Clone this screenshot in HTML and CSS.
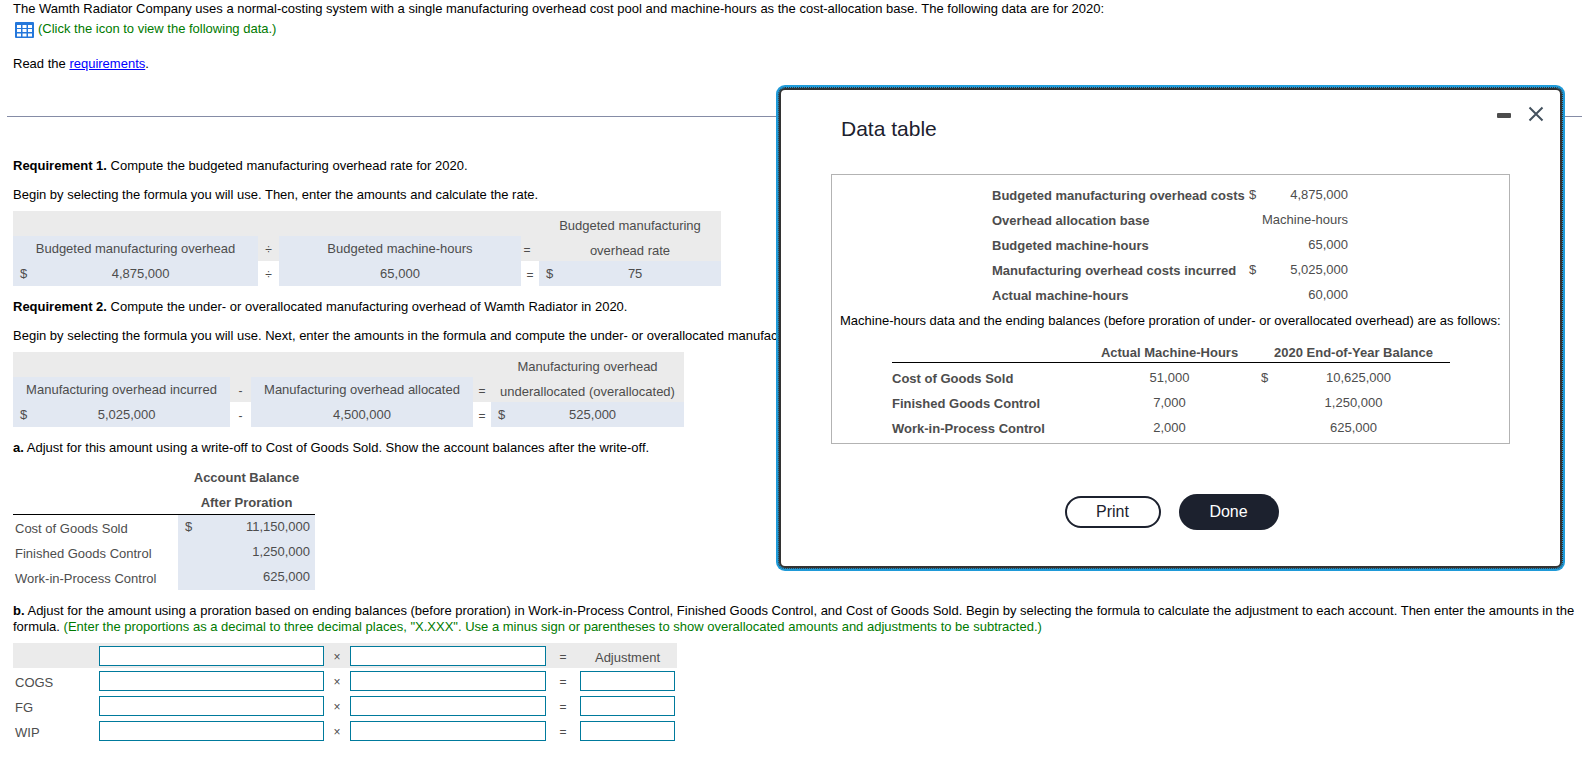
FILE: index.html
```html
<!DOCTYPE html>
<html lang="en">
<head>
<meta charset="utf-8">
<title>Wamth Radiator Company</title>
<link rel="stylesheet" href="styles.css">
</head>
<body>
<main class="page">
  <section class="intro">
    <p>The Wamth Radiator Company uses a normal-costing system with a single manufacturing overhead cost pool and machine-hours as the cost-allocation base. The following data are for 2020:</p>
    <p class="icon-line">
      <button type="button" class="table-icon" aria-label="View the data table">
        <svg width="20" height="16" viewBox="0 0 20 16"><rect width="19" height="16" rx="1" fill="#2477db"/><path fill="#fff" d="M2 3h4v3H2zM7.500 3h4v3h-4zM13 3h4v3h-4zM2 7h4v3H2zM7.500 7h4v3h-4zM13 7h4v3h-4zM2 11.500h4v3H2zM7.500 11.500h4v3h-4zM13 11.500h4v3h-4z"/></svg>
      </button>
      <span class="hint">(Click the icon to view the following data.)</span>
    </p>
    <p class="read">Read the <a href="#requirements">requirements</a>.</p>
  </section>
  <hr class="rule">
  <section class="work">
    <p id="requirements"><b>Requirement 1.</b> Compute the budgeted manufacturing overhead rate for 2020.</p>
    <p>Begin by selecting the formula you will use. Then, enter the amounts and calculate the rate.</p>
    <table class="formula">
      <colgroup><col class="w-245"><col class="w-21"><col class="w-242"><col class="w-18"><col class="w-182"></colgroup>
      <tr class="head"><td colspan="4"></td><th rowspan="2"><span class="low">Budgeted manufacturing</span><span class="low">overhead rate</span></th></tr>
      <tr class="head"><th class="fill">Budgeted manufacturing overhead</th><td class="op">÷</td><th class="fill">Budgeted machine-hours</th><td class="op tight">=</td></tr>
      <tr><td class="fill"><span class="money"><span>$</span><span>4,875,000</span></span></td><td class="op">÷</td><td class="fill">65,000</td><td class="op">=</td><td class="fill"><span class="money"><span>$</span><span>75</span></span></td></tr>
    </table>
    <p><b>Requirement 2.</b> Compute the under- or overallocated manufacturing overhead of Wamth Radiator in 2020.</p>
    <p class="clip">Begin by selecting the formula you will use. Next, enter the amounts in the formula and compute the under- or overallocated manufacturing overhead.</p>
    <table class="formula">
      <colgroup><col class="w-217"><col class="w-21"><col class="w-222"><col class="w-18"><col class="w-193"></colgroup>
      <tr class="head"><td colspan="4"></td><th rowspan="2"><span class="low">Manufacturing overhead</span><span class="low">underallocated (overallocated)</span></th></tr>
      <tr class="head"><th class="fill">Manufacturing overhead incurred</th><td class="op">-</td><th class="fill">Manufacturing overhead allocated</th><td class="op">=</td></tr>
      <tr><td class="fill"><span class="money"><span>$</span><span>5,025,000</span></span></td><td class="op">-</td><td class="fill">4,500,000</td><td class="op">=</td><td class="fill"><span class="money"><span>$</span><span>525,000</span></span></td></tr>
    </table>
    <p><b>a.</b> Adjust for this amount using a write-off to Cost of Goods Sold. Show the account balances after the write-off.</p>
    <table class="balance">
      <colgroup><col class="w-165"><col class="w-137"></colgroup>
      <thead><tr><td></td><th><span class="low">Account Balance</span><span class="low">After Proration</span></th></tr></thead>
      <tbody>
        <tr><th>Cost of Goods Sold</th><td class="fill"><span class="amount"><span>$</span><span>11,150,000</span></span></td></tr>
        <tr><th>Finished Goods Control</th><td class="fill"><span class="amount"><span></span><span>1,250,000</span></span></td></tr>
        <tr><th>Work-in-Process Control</th><td class="fill"><span class="amount"><span></span><span>625,000</span></span></td></tr>
      </tbody>
    </table>
    <p class="part-b"><b>b.</b> Adjust for the amount using a proration based on ending balances (before proration) in Work-in-Process Control, Finished Goods Control, and Cost of Goods Sold. Begin by selecting the formula to calculate the adjustment to each account. Then enter the amounts in the formula. <span class="hint">(Enter the proportions as a decimal to three decimal places, "X.XXX". Use a minus sign or parentheses to show overallocated amounts and adjustments to be subtracted.)</span></p>
    <table class="entry">
      <colgroup><col class="w-84"><col class="w-229"><col class="w-22"><col class="w-200"><col class="w-30"><col class="w-99"></colgroup>
      <tr class="head"><td></td><td><input type="text" aria-label="Formula first factor"></td><td class="op">×</td><td><input type="text" aria-label="Formula second factor"></td><td class="op">=</td><th class="low mid">Adjustment</th></tr>
      <tr><th class="low">COGS</th><td><input type="text" aria-label="COGS first factor"></td><td class="op">×</td><td><input type="text" aria-label="COGS second factor"></td><td class="op">=</td><td><input type="text" aria-label="COGS adjustment"></td></tr>
      <tr><th class="low">FG</th><td><input type="text" aria-label="FG first factor"></td><td class="op">×</td><td><input type="text" aria-label="FG second factor"></td><td class="op">=</td><td><input type="text" aria-label="FG adjustment"></td></tr>
      <tr><th class="low">WIP</th><td><input type="text" aria-label="WIP first factor"></td><td class="op">×</td><td><input type="text" aria-label="WIP second factor"></td><td class="op">=</td><td><input type="text" aria-label="WIP adjustment"></td></tr>
    </table>
  </section>
</main>

<div class="dialog" role="dialog" aria-labelledby="dialog-title">
  <header class="dialog-head">
    <h2 id="dialog-title">Data table</h2>
    <div class="window-buttons">
      <button type="button" aria-label="Minimize"><svg width="14" height="16" viewBox="0 0 14 16"><rect y="7" width="14" height="5" rx="1" fill="#4c4c4c"/></svg></button>
      <button type="button" aria-label="Close"><svg width="16" height="16" viewBox="0 0 16 16"><path d="M1.500 1.500l13 13M14.500 1.500l-13 13" fill="none" stroke="#44515e" stroke-width="2"/></svg></button>
    </div>
  </header>
  <div class="data-box">
    <table class="facts">
      <colgroup><col class="w-257"><col class="w-13"><col class="w-86"></colgroup>
      <tr><th>Budgeted manufacturing overhead costs</th><td>$</td><td>4,875,000</td></tr>
      <tr><th>Overhead allocation base</th><td></td><td>Machine-hours</td></tr>
      <tr><th>Budgeted machine-hours</th><td></td><td>65,000</td></tr>
      <tr><th>Manufacturing overhead costs incurred</th><td>$</td><td>5,025,000</td></tr>
      <tr><th>Actual machine-hours</th><td></td><td>60,000</td></tr>
    </table>
    <p>Machine-hours data and the ending balances (before proration of under- or overallocated overhead) are as follows:</p>
    <table class="year-end">
      <colgroup><col class="w-200"><col class="w-155"><col class="w-22"><col class="w-181"></colgroup>
      <thead><tr><td></td><th>Actual Machine-Hours</th><td></td><th class="year">2020 End-of-Year Balance</th></tr></thead>
      <tbody>
        <tr><th>Cost of Goods Sold</th><td>51,000</td><td class="sign">$</td><td class="first">10,625,000</td></tr>
        <tr><th>Finished Goods Control</th><td>7,000</td><td></td><td>1,250,000</td></tr>
        <tr><th>Work-in-Process Control</th><td>2,000</td><td></td><td>625,000</td></tr>
      </tbody>
    </table>
  </div>
  <footer class="dialog-actions">
    <button type="button" class="btn-print">Print</button>
    <button type="button" class="btn-done">Done</button>
  </footer>
</div>
</body>
</html>
```

FILE: styles.css
```css
* { box-sizing: border-box; }
body { margin: 0; background: #fff; color: #000; font: 13px/16px "Liberation Sans", Arial, sans-serif; }
p { margin: 0; }
table { border-collapse: collapse; table-layout: fixed; width: 0; color: #4d4d4d; }
th, td { padding: 0; height: 25px; line-height: 25px; font-weight: normal; white-space: nowrap; }
a { color: #00f; }
button { padding: 0; border: 0; background: none; font: inherit; }
svg { display: block; }

.intro { padding: 1px 13px 0; }
.icon-line { display: flex; align-items: flex-start; gap: 3px; margin-top: 4px; padding-left: 2px; }
.table-icon { margin-top: 1px; }
.hint { color: #007a00; }
.read { margin-top: 18px; }
.rule { margin: 44px 0 0 7px; border: 0; border-top: 1px solid #858ca6; }
.work { padding: 41px 0 0 13px; }
.work > p + p { margin-top: 13px; }
.work > table { margin: 8px 0 13px; }
.work > p.part-b { margin: 13px 4px 0 0; }
.clip { white-space: nowrap; overflow: hidden; }

.head { background: #ebebeb; }
.fill { background: #e2e8f2; }
.low { display: block; height: 25px; padding-top: 4px; line-height: 21px; }
th.low { display: table-cell; text-align: left; }
th.low.mid { text-align: center; padding-right: 2px; }
.op { padding-top: 4px; line-height: 21px; text-align: center; font-size: 12px; }
.op.tight { padding-right: 6px; }
.formula td, .formula th { text-align: center; }
.money { display: flex; padding: 0 4px 0 7px; }
.money span:last-child { flex: 1; }
.balance thead th { padding-bottom: 1px; font-weight: bold; border-bottom: 1px solid #000; }
.balance thead td { border-bottom: 1px solid #000; }
.balance tbody th { padding: 2px 0 0 2px; line-height: 23px; text-align: left; }
.amount { display: flex; justify-content: space-between; padding: 0 5px 0 7px; line-height: 24px; height: 25px; }
.work > table.balance { margin: 7px 0 0; }
.work > table.entry { margin: 8px 0 0; }
.entry th.low { padding-left: 2px; }
.entry input { display: block; width: calc(100% - 4px); height: 20px; margin: 3px 2px 2px; padding: 0 4px; border: 1px solid #007a9c; background: #fff; font: inherit; }

.dialog { position: absolute; top: 88px; right: 20px; width: 783px; padding: 13px 16px 36px 50px; border: 2px solid #333; border-radius: 6px; outline: 1px dotted #333; background: #fff; box-shadow: 0 0 0 3px #1f9ad8; }
.dialog-head { display: flex; justify-content: space-between; align-items: flex-start; }
.dialog-head h2 { margin: 14px 0 0 10px; color: #1c212e; font-size: 21px; line-height: 24px; font-weight: normal; }
.window-buttons { display: flex; gap: 17px; padding-top: 3px; }
.data-box { width: 679px; margin-top: 33px; padding: 8px 8px 5px; border: 1px solid #b3b3b3; }
.facts { margin-left: 152px; }
.facts th { font-weight: bold; text-align: left; }
.facts td { line-height: 24px; padding-bottom: 1px; text-align: right; }
.facts td:nth-child(2) { text-align: left; }
.data-box p { margin: 5px 0 0; white-space: nowrap; }
.year-end { margin: 11px 0 0 52px; }
.year-end thead th, .year-end thead td { height: 22px; padding-top: 4px; line-height: 17px; border-bottom: 1px solid #000; }
.year-end th { font-weight: bold; }
.year-end tbody th { text-align: left; padding-top: 6px; line-height: 19px; }
.year-end tbody td { text-align: center; padding-top: 5px; line-height: 20px; }
.year-end tbody td:last-child, .year-end .year { padding-right: 12px; }
.year-end tbody td.first { padding-right: 2px; }
.year-end tbody td.sign { padding-left: 13px; }
.dialog-actions { display: flex; justify-content: center; align-items: center; gap: 18px; margin: 50px 32px 0 0; }
.dialog-actions button { font-size: 16px; line-height: 20px; border-radius: 18px; }
.btn-print { min-width: 96px; height: 32px; border: 2px solid #1c212e; color: #1c212e; }
.btn-done { min-width: 100px; height: 36px; background: #1c212e; color: #fff; }

.w-13 { width: 13px; } .w-18 { width: 18px; } .w-21 { width: 21px; } .w-22 { width: 22px; } .w-30 { width: 30px; }
.w-84 { width: 84px; } .w-86 { width: 86px; } .w-99 { width: 99px; } .w-137 { width: 137px; }
.w-155 { width: 155px; } .w-165 { width: 165px; } .w-181 { width: 181px; } .w-182 { width: 182px; }
.w-193 { width: 193px; } .w-200 { width: 200px; } .w-217 { width: 217px; } .w-222 { width: 222px; }
.w-229 { width: 229px; } .w-242 { width: 242px; } .w-245 { width: 245px; } .w-257 { width: 257px; }
```
